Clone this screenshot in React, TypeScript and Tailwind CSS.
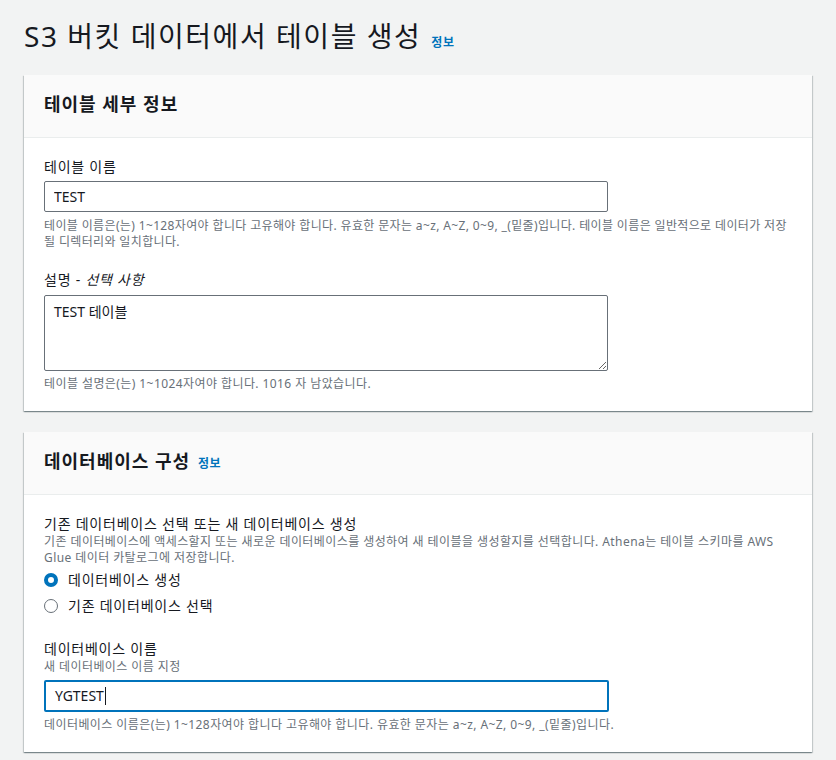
import React from 'react'

const font = "[font-family:'Noto_Sans','Noto_Sans_CJK_KR',sans-serif]"

function InfoLink() {
    return (
        <a className="text-xs font-bold text-[#0073bb] leading-4 tracking-[0.04em] cursor-pointer">정보</a>
    )
}

function Card({ title, info, children }: { title: string; info?: boolean; children: React.ReactNode }) {
    return (
        <div className="bg-white shadow-[0_1px_1px_0_rgba(0,28,36,0.3),1px_1px_1px_0_rgba(0,28,36,0.15),-1px_1px_1px_0_rgba(0,28,36,0.15)]">
            <div className="flex items-baseline gap-2 bg-[#fafafa] border-b border-[#eaeded] px-5 pt-[17px] pb-[21px]">
                <h2 className="text-lg font-bold leading-6 tracking-[0.055em] text-[#16191f]">{title}</h2>
                {info && <InfoLink />}
            </div>
            <div className="px-5 pt-[19px] pb-[19px]">{children}</div>
        </div>
    )
}

function Radio({ checked, label }: { checked?: boolean; label: string }) {
    return (
        <label className="flex items-center gap-[10px] h-6 text-sm tracking-[0.055em] text-[#16191f]">
            <span
                className={
                    checked
                        ? "w-[14px] h-[14px] rounded-full border-4 border-[#0073bb] bg-white"
                        : "w-[14px] h-[14px] rounded-full border-[1.5px] border-[#687078] bg-white"
                }
            />
            {label}
        </label>
    )
}

export default function App() {
    return (
        <div className={`min-h-screen bg-[#f2f3f3] px-6 pt-[18px] pb-6 text-[#16191f] ${font}`}>
            <div className="flex items-baseline gap-[10px]">
                <h1 className="text-[28px] font-normal leading-9 tracking-[0.055em] text-[#16191f]">S3 버킷 데이터에서 테이블 생성</h1>
                <InfoLink />
            </div>

            <div className="mt-[21px]">
                <Card title="테이블 세부 정보">
                    <div className="text-sm leading-5 tracking-[0.055em]">테이블 이름</div>
                    <input
                        readOnly
                        value="TEST"
                        className="mt-[4px] block h-[31px] w-[564px] rounded-[2px] border border-[#687078] bg-white px-[9px] text-sm text-[#16191f] outline-none"
                    />
                    <p className="mt-[6px] text-xs leading-4 tracking-[0.03em] text-[#687078]">
                        테이블 이름은(는) 1~128자여야 합니다 고유해야 합니다. 유효한 문자는 a~z, A~Z, 0~9, _(밑줄)입니다. 테이블 이름은 일반적으로 데이터가 저장
                        <br />
                        될 디렉터리와 일치합니다.
                    </p>

                    <div className="mt-[20px] text-sm leading-5 tracking-[0.055em]">
                        설명 - <i>선택 사항</i>
                    </div>
                    <textarea
                        readOnly
                        defaultValue="TEST 테이블"
                        className="mt-[5px] block h-[76px] w-[564px] rounded-[2px] border border-[#687078] bg-white px-[9px] py-[6px] text-sm leading-5 text-[#16191f] outline-none"
                    />
                    <p className="mt-[5px] text-xs leading-4 tracking-[0.035em] text-[#687078]">
                        테이블 설명은(는) 1~1024자여야 합니다. 1016 자 남았습니다.
                    </p>
                </Card>
            </div>

            <div className="mt-[21px]">
                <Card title="데이터베이스 구성" info>
                    <div className="text-sm leading-5 tracking-[0.055em]">기존 데이터베이스 선택 또는 새 데이터베이스 생성</div>
                    <p className="text-xs leading-4 tracking-[0.035em] text-[#687078]">
                        기존 데이터베이스에 액세스할지 또는 새로운 데이터베이스를 생성하여 새 테이블을 생성할지를 선택합니다. Athena는 테이블 스키마를 AWS Glue 데이터 카탈로그에 저장합니다.
                    </p>
                    <div className="mt-[2px] flex flex-col gap-[2px]">
                        <Radio checked label="데이터베이스 생성" />
                        <Radio label="기존 데이터베이스 선택" />
                    </div>

                    <div className="mt-[21px] text-sm leading-5 tracking-[0.055em]">데이터베이스 이름</div>
                    <div className="text-xs leading-4 tracking-[0.035em] text-[#687078]">새 데이터베이스 이름 지정</div>
                    <div className="mt-[5px] flex h-[32px] w-[565px] items-center rounded-[2px] border-2 border-[#0073bb] bg-white px-[9px] text-sm text-[#16191f]">
                        YGTEST
                        <span className="ml-px inline-block h-[18px] w-px bg-[#16191f]" />
                    </div>
                    <p className="mt-[5px] text-xs leading-4 tracking-[0.035em] text-[#687078]">
                        데이터베이스 이름은(는) 1~128자여야 합니다 고유해야 합니다. 유효한 문자는 a~z, A~Z, 0~9, _(밑줄)입니다.
                    </p>
                </Card>
            </div>
        </div>
    )
}
